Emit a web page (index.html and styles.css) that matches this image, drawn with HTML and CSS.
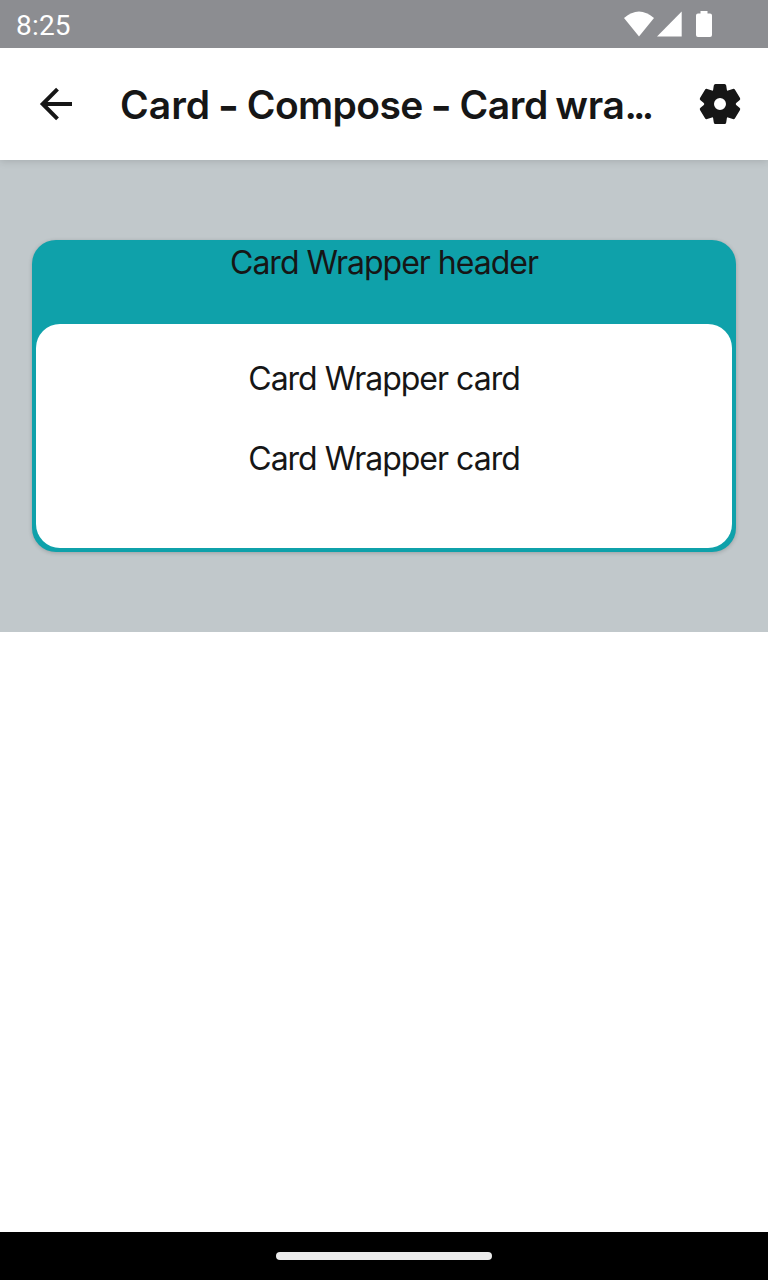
FILE: index.html
```html
<!DOCTYPE html>
<html lang="en">
<head>
<meta charset="utf-8">
<title>Card - Compose</title>
<link rel="stylesheet" href="styles.css">
</head>
<body>
<header class="status-bar">
  <span class="clock">8:25</span>
  <svg class="status-icons" width="92" height="28" viewBox="0 0 92 28" aria-hidden="true">
    <path d="M4 8Q19-5 34 8L19 26.500Z"/>
    <path d="M37 26.500H61.700V1.500Z"/>
    <path d="M80.500 1h7v2.500h2.500q2 0 2 2V25q0 2-2 2H78q-2 0-2-2V5.500q0-2 2-2h2.500Z"/>
  </svg>
</header>
<nav class="app-bar">
  <svg class="icon" viewBox="0 0 48 48" aria-hidden="true"><path class="arrow" d="M40 24H10M25.500 9.200L10.700 24l14.800 14.800"/></svg>
  <h1 class="title">Card <span class="dash">-</span> <span class="name">Compose</span> <span class="dash">-</span> <span class="clipped">Card wra<span class="dots">...</span></span></h1>
  <svg class="icon" viewBox="0 0 48 48" aria-hidden="true"><path fill-rule="evenodd" d="M19.500 4h9q1.500 0 1.700 1.500l.7 4.500q.2 1 1.100.6l4.800-1.700q1.500-.5 2.200.8l5 8.300q.7 1.300-.5 2.200l-3.300 2.800q-1 1 0 2l3.300 2.800q1.200.9.500 2.200l-5 8.300q-.7 1.300-2.200.8L32 37.400q-.9-.4-1.100.6l-.7 4.500Q30 44 28.500 44h-9q-1.500 0-1.700-1.500l-.7-4.500q-.2-1-1.100-.6l-4.800 1.700q-1.500.5-2.200-.8L4 30q-.7-1.300.5-2.200L7.800 25q1-1 0-2l-3.300-2.800Q3.300 19.300 4 18l5-8.300q.7-1.300 2.200-.8l4.800 1.700q.9.4 1.100-.6l.7-4.500Q18 4 19.500 4ZM24 18a6 6 0 1 0 0 12 6 6 0 0 0 0-12Z"/></svg>
</nav>
<main class="content">
  <section class="stage">
    <article class="wrapper">
      <p class="wrapper-header">Card Wrapper header</p>
      <div class="card">
        <p class="card-text">Card Wrapper card</p>
        <p class="card-text">Card Wrapper card</p>
      </div>
    </article>
  </section>
</main>
<footer class="nav-bar"><div class="handle"></div></footer>
</body>
</html>
```
FILE: styles.css
```css
* { box-sizing: border-box; margin: 0; }
body {
  height: 1280px;
  display: flex;
  flex-direction: column;
  background: #fff;
  color: #161616;
  font-family: Inter, sans-serif;
}
.status-bar {
  height: 48px;
  padding: 0 56px 0 16px;
  display: flex;
  align-items: center;
  justify-content: space-between;
  background: #8c8d91;
  color: #fff;
  z-index: 2;
}
.clock { font: 28px/32px Roboto, sans-serif; padding-top: 3px; letter-spacing: .2px; }
.status-icons { fill: #fff; }
.app-bar {
  height: 112px;
  padding: 0 24px 0 32px;
  display: flex;
  align-items: center;
  background: #fff;
  box-shadow: 0 1px 8px rgba(0, 0, 0, .15);
  z-index: 1;
}
.status-bar, .app-bar { position: relative; }
.icon { width: 48px; height: 48px; flex: none; fill: #161616; }
.arrow { fill: none; stroke: #161616; stroke-width: 4; }
.title {
  flex: 1;
  padding: 2px 0 0 40px;
  font-size: 39px;
  line-height: 48px;
  font-weight: 600;
  white-space: nowrap;
  word-spacing: -2.200px;
}
.dash { font-size: 46px; line-height: 0; vertical-align: -3px; }
.name { letter-spacing: -.6px; }
.clipped { letter-spacing: -.4px; word-spacing: -2px; }
.dots { letter-spacing: -3.800px; }
.content { flex: 1; }
.stage { height: 472px; padding: 80px 32px; background: #c1c8cb; }
.wrapper {
  height: 312px;
  padding: 4px;
  border-radius: 24px;
  background: #0fa1aa;
  box-shadow: 0 1px 4px rgba(0, 0, 0, .2);
}
.wrapper-header, .card-text { font-size: 32px; letter-spacing: -1px; text-align: center; }
.wrapper-header { height: 80px; line-height: 38px; }
.card {
  height: 224px;
  padding-top: 15px;
  border-radius: 24px;
  background: #fff;
}
.card-text { line-height: 80px; }
.nav-bar { height: 48px; display: grid; place-items: center; background: #000; }
.handle { width: 216px; height: 8px; border-radius: 4px; background: #ebebeb; }
```
